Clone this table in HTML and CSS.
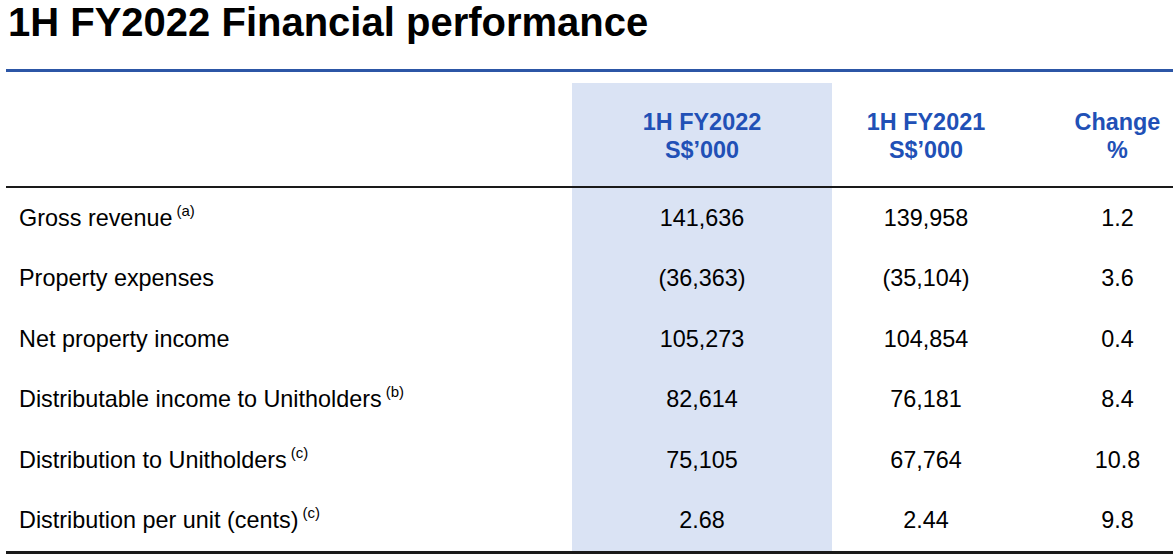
FILE: index.html
```html
<!DOCTYPE html>
<html>
<head>
<meta charset="utf-8">
<link rel="stylesheet" href="styles.css">
</head>
<body>
<div class="slide">
  <h1 class="title">1H FY2022 Financial performance</h1>
  <div class="rule"></div>
  <div class="table">
    <div class="row head">
      <div class="cell label"></div>
      <div class="cell c1"><span>1H FY2022</span><span>S$’000</span></div>
      <div class="cell c2"><span>1H FY2021</span><span>S$’000</span></div>
      <div class="cell c3"><span>Change</span><span>%</span></div>
    </div>
    <div class="row">
      <div class="cell label">Gross revenue <sup>(a)</sup></div>
      <div class="cell c1">141,636</div>
      <div class="cell c2">139,958</div>
      <div class="cell c3">1.2</div>
    </div>
    <div class="row">
      <div class="cell label">Property expenses</div>
      <div class="cell c1">(36,363)</div>
      <div class="cell c2">(35,104)</div>
      <div class="cell c3">3.6</div>
    </div>
    <div class="row">
      <div class="cell label">Net property income</div>
      <div class="cell c1">105,273</div>
      <div class="cell c2">104,854</div>
      <div class="cell c3">0.4</div>
    </div>
    <div class="row">
      <div class="cell label">Distributable income to Unitholders <sup>(b)</sup></div>
      <div class="cell c1">82,614</div>
      <div class="cell c2">76,181</div>
      <div class="cell c3">8.4</div>
    </div>
    <div class="row">
      <div class="cell label">Distribution to Unitholders <sup>(c)</sup></div>
      <div class="cell c1">75,105</div>
      <div class="cell c2">67,764</div>
      <div class="cell c3">10.8</div>
    </div>
    <div class="row">
      <div class="cell label">Distribution per unit (cents) <sup>(c)</sup></div>
      <div class="cell c1">2.68</div>
      <div class="cell c2">2.44</div>
      <div class="cell c3">9.8</div>
    </div>
  </div>
</div>
</body>
</html>
```

FILE: styles.css
```css
html, body {
  margin: 0;
  padding: 0;
  background: #ffffff;
}

.slide {
  width: 1173px;
  height: 556px;
  overflow: hidden;
  font-family: "Liberation Sans", Arial, sans-serif;
  color: #000;
}

.title {
  margin: 0;
  padding: 0 0 0 8px;
  height: 69px;
  font-size: 40px;
  font-weight: bold;
  line-height: 44px;
  letter-spacing: 0;
}

.rule {
  margin-left: 6px;
  height: 3px;
  background: #2c56a6;
}

.table {
  margin-left: 6px;
  margin-top: 11px;
  border-bottom: 3px solid #1a1a1a;
}

.row {
  display: grid;
  grid-template-columns: 566px 260px 188px 153px;
  height: 60.5px;
  font-size: 23.4px;
}

.row.head {
  height: 103px;
  border-bottom: 2px solid #1a1a1a;
}

.cell {
  display: flex;
  align-items: center;
  justify-content: center;
  text-align: center;
  white-space: nowrap;
}

.cell.label {
  justify-content: flex-start;
  padding-left: 13px;
}

.cell.c1 {
  background: #dae3f4;
}

.cell.c3 {
  padding-left: 42px;
}

.head .cell {
  flex-direction: column;
  color: #2150b6;
  font-weight: bold;
  line-height: 28px;
  padding-top: 2px;
}

sup {
  font-size: 15px;
  vertical-align: 0;
  position: relative;
  top: -8px;
  margin-left: 4px;
}
```
